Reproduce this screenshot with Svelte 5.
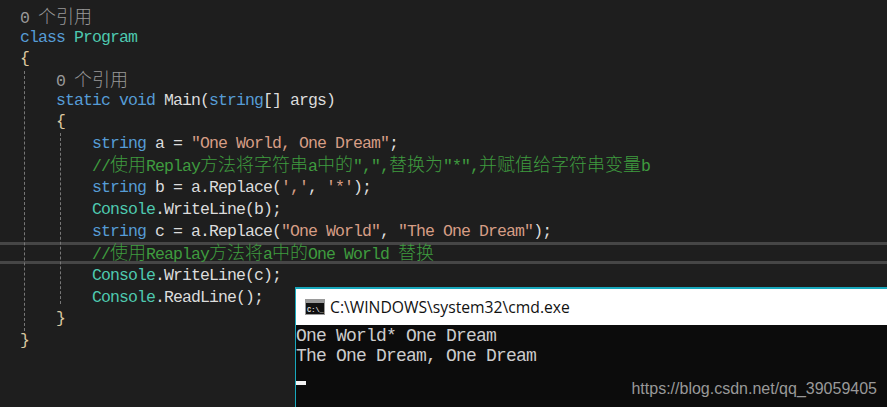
<script>
  // each line: height, indent, tokens [class, text]
  const lines = [
    { h: 20, indent: 0, tokens: [["lens", "0 个引用"]] },
    { h: 21, indent: 0, tokens: [["kw", "class"], ["", " "], ["type", "Program"]] },
    { h: 21, indent: 0, tokens: [["brace", "{"]] },
    { h: 22, indent: 1, tokens: [["lens", "0 个引用"]] },
    { h: 19, indent: 1, tokens: [["kw", "static void"], ["", " Main("], ["kw", "string"], ["", "[] args)"]] },
    { h: 22, indent: 1, tokens: [["brace", "{"]] },
    { h: 22, indent: 2, tokens: [["kw", "string"], ["", " a = "], ["str", '"One World, One Dream"'], ["", ";"]] },
    { h: 22, indent: 2, tokens: [["com", '//使用Replay方法将字符串a中的",",替换为"*",并赋值给字符串变量b']] },
    { h: 22, indent: 2, tokens: [["kw", "string"], ["", " b = a.Replace("], ["str", "','"], ["", ", "], ["str", "'*'"], ["", ");"]] },
    { h: 22, indent: 2, tokens: [["type", "Console"], ["", ".WriteLine(b);"]] },
    { h: 22, indent: 2, tokens: [["kw", "string"], ["", " c = a.Replace("], ["str", '"One World"'], ["", ", "], ["str", '"The One Dream"'], ["", ");"]] },
    { h: 22, indent: 2, current: true, tokens: [["com", "//使用Reaplay方法将a中的One World 替换"]] },
    { h: 22, indent: 2, tokens: [["type", "Console"], ["", ".WriteLine(c);"]] },
    { h: 22, indent: 2, tokens: [["type", "Console"], ["", ".ReadLine();"]] },
    { h: 21, indent: 1, tokens: [["brace", "}"]] },
    { h: 22, indent: 0, tokens: [["brace", "}"]] }
  ];

  // chinese glyphs are wider than the latin cell, so they get their own size
  function parts(text) {
    return text.split(/([\u4e00-\u9fff]+)/).filter(Boolean);
  }
  const isCjk = (s) => /[\u4e00-\u9fff]/.test(s);
</script>

<div class="screen">
  <div class="editor">
    {#each lines as line}
      <div class="line" class:current={line.current} style="height:{line.h}px;padding-left:{20 + line.indent * 36}px">
        {#each line.tokens as [cls, text]}
          <span class={cls}>{#each parts(text) as p}{#if isCjk(p)}<span class="cjk">{p}</span>{:else}{p}{/if}{/each}</span>
        {/each}
      </div>
    {/each}
  </div>

  <div class="guide outer"></div>
  <div class="guide inner"></div>

  <div class="cmd">
    <div class="titlebar">
      <svg width="20" height="16" viewBox="0 0 20 16">
        <rect width="20" height="16" fill="#9a9a9a" />
        <rect x="1" y="4" width="18" height="11" fill="#111" />
        <text x="2" y="12.5" font-size="7" font-weight="700" font-family="Liberation Mono" fill="#ddd">C:\_</text>
      </svg>
      <span>C:\WINDOWS\system32\cmd.exe</span>
    </div>
    <div class="console">
      <div>One World* One Dream</div>
      <div>The One Dream, One Dream</div>
      <div class="cursor"></div>
    </div>
    <div class="mark">https://blog.csdn.net/qq_39059405</div>
  </div>
</div>

<style>
  :global(body) {
    margin: 0;
    background: #1e1e1e;
  }

  .screen {
    position: relative;
    width: 887px;
    height: 407px;
    overflow: hidden;
    background: #1e1e1e;
  }

  .editor {
    padding-top: 7px;
    font-family: "Liberation Mono", monospace;
    font-size: 16.5px;
    letter-spacing: -0.9px;
    color: #dcdcdc;
  }

  .line {
    display: flex;
    align-items: center;
    box-sizing: border-box;
    white-space: pre;
  }

  .line.current {
    border-top: 3px solid #464646;
    border-bottom: 3px solid #464646;
  }

  .cjk {
    font-family: "Noto Sans CJK SC", sans-serif;
    font-size: 18px;
    font-weight: 300;
    letter-spacing: 0;
    line-height: 1;
  }

  .lens {
    color: #999;
  }
  .kw {
    color: #569cd6;
  }
  .type {
    color: #4ec9b0;
  }
  .str {
    color: #d69d85;
  }
  .com {
    color: #3f9b3f;
  }
  .brace {
    color: #dcc9a0;
  }

  .guide {
    position: absolute;
    width: 0;
    border-left: 1px dashed #777;
  }
  .guide.outer {
    left: 24px;
    top: 71px;
    height: 260px;
  }
  .guide.inner {
    left: 60px;
    top: 133px;
    height: 171px;
  }

  .cmd {
    position: absolute;
    left: 295px;
    top: 287px;
    right: 0;
    bottom: 0;
    box-sizing: border-box;
    border-top: 2px solid #18a8bc;
    border-left: 1px solid #18a8bc;
    background: #0c0c0c;
  }

  .titlebar {
    display: flex;
    align-items: center;
    gap: 5px;
    height: 36px;
    padding-left: 9px;
    background: #fff;
    color: #111;
    font-family: "Open Sans", sans-serif;
    font-size: 15.7px;
  }

  .console {
    padding-top: 1px;
    font-family: "Liberation Mono", monospace;
    font-size: 18px;
    letter-spacing: -0.8px;
    line-height: 20px;
    color: #ccc;
  }

  .cursor {
    width: 10px;
    height: 4px;
    margin-top: 15px;
    background: #f2f2f2;
  }

  .mark {
    position: absolute;
    right: 10px;
    bottom: 9px;
    font-family: "Liberation Sans", sans-serif;
    font-size: 16px;
    color: #999;
  }
</style>
